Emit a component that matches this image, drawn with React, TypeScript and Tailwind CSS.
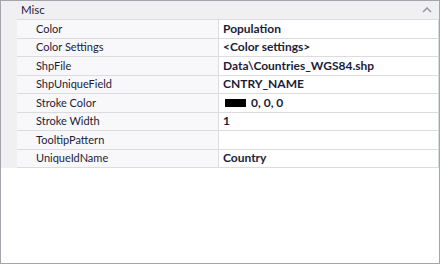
const rows: { name: string; value: string; swatch?: boolean }[] = [
  { name: "Color", value: "Population" },
  { name: "Color Settings", value: "<Color settings>" },
  { name: "ShpFile", value: "Data\\Countries_WGS84.shp" },
  { name: "ShpUniqueField", value: "CNTRY_NAME" },
  { name: "Stroke Color", value: "0, 0, 0", swatch: true },
  { name: "Stroke Width", value: "1" },
  { name: "TooltipPattern", value: "" },
  { name: "UniqueIdName", value: "Country" },
];

export default function App() {
  return (
    <div
      className="flex h-[264px] w-[440px] flex-col border border-[#a4a4ac] bg-white text-[11.5px] text-[#1c1c38]"
      style={{ fontFamily: "Lato, 'Liberation Sans', sans-serif" }}
    >
      <div className="flex h-[18px] items-center bg-[#f0f0f3] pl-[20px] pr-[6px]">
        <span className="flex-1">Misc</span>
        <svg width="10" height="6" viewBox="0 0 10 6" className="mr-[1px]">
          <path d="M1 5 L5 1 L9 5" fill="none" stroke="#9a9aa2" strokeWidth="1.6" />
        </svg>
      </div>
      <div className="flex">
        <div className="w-[16px] shrink-0 bg-[#f0f0f3]" />
        <div className="flex-1 border-r border-[#dcdce0]">
          {rows.map((r) => (
            <div key={r.name} className="flex h-[18.5px] border-t border-[#dcdce0]">
              <div className="flex w-[202px] items-center border-r border-[#dcdce0] bg-[#f8f8fa] pl-[19px] text-[11px]">
                {r.name}
              </div>
              <div className="flex flex-1 items-center gap-[5px] pl-[4px] text-[12px] font-bold">
                {r.swatch && <span className="ml-[2px] h-[8px] w-[21px] bg-black" />}
                {r.value}
              </div>
            </div>
          ))}
          <div className="border-t border-[#dcdce0]" />
        </div>
      </div>
      <div className="flex-1" />
    </div>
  );
}
